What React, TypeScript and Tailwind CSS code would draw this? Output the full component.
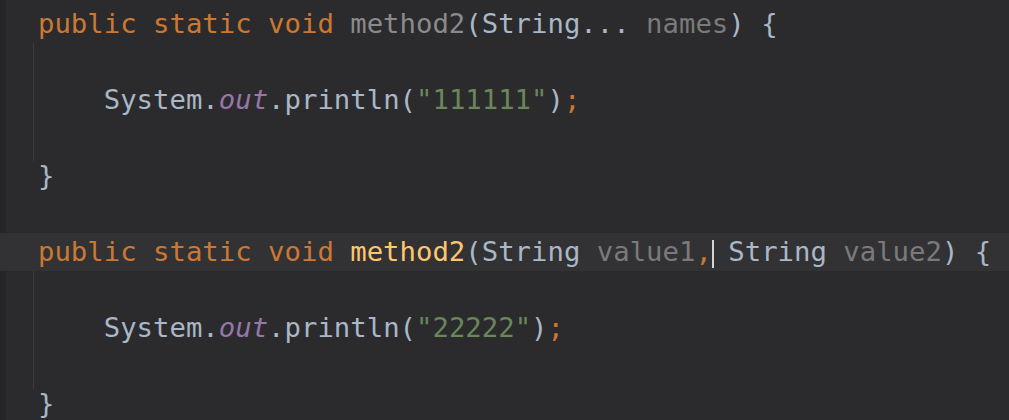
const kw = "text-[#cc7832]";
const plain = "text-[#a9b7c6]";
const unused = "text-[#7a7a7c]";
const str = "text-[#6a8759]";
const field = "text-[#9876aa] italic";

const Row = ({ children, active }: { children?: React.ReactNode; active?: boolean }) => (
  <div className={`h-[38px] leading-[38px] whitespace-pre pl-[38px] ${active ? "bg-[#323234]" : ""}`}>
    {children}
  </div>
);

const Body = ({ children }: { children: React.ReactNode }) => (
  <div className="ml-[33px] border-l border-[#3c3c3e] -mb-[4px] pb-[4px]">
    <div className="-ml-[34px]">{children}</div>
  </div>
);

const Println = ({ text }: { text: string }) => (
  <Row>
    <span className={plain}>{"    System."}</span>
    <span className={field}>out</span>
    <span className={plain}>.println(</span>
    <span className={str}>"{text}"</span>
    <span className={plain}>)</span>
    <span className={kw}>;</span>
  </Row>
);

export default function App() {
  return (
    <div className="w-[1009px] h-[420px] overflow-hidden bg-[#2b2b2d] flex">
      <div className="w-[6px] bg-[#262628] shrink-0" />
      <div className="flex-1 -ml-[6px] pt-[5px] font-['DejaVu_Sans_Mono',monospace] text-[27.3px]">
        <Row>
          <span className={kw}>public static void </span>
          <span className="text-[#8a8a8c]">method2</span>
          <span className={plain}>(String... </span>
          <span className={unused}>names</span>
          <span className={plain}>) {"{"}</span>
        </Row>
        <Body>
          <Row />
          <Println text="111111" />
          <Row />
        </Body>
        <Row>
          <span className={plain}>{"}"}</span>
        </Row>
        <Row />
        <Row active>
          <span className={kw}>public static void </span>
          <span className="text-[#ffc66d]">method2</span>
          <span className={plain}>(String </span>
          <span className={unused}>value1</span>
          <span className={kw}>,</span>
          <span className="inline-block w-[2px] h-[28px] -mr-[2px] align-middle bg-[#d4d4d4]" />
          <span className={plain}> String </span>
          <span className={unused}>value2</span>
          <span className={plain}>) {"{"}</span>
        </Row>
        <Body>
          <Row />
          <Println text="22222" />
          <Row />
        </Body>
        <Row>
          <span className={plain}>{"}"}</span>
        </Row>
      </div>
    </div>
  );
}
